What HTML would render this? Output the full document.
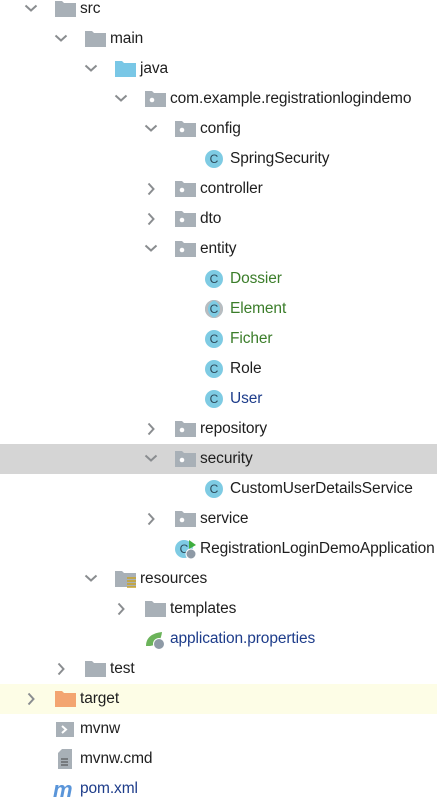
<!DOCTYPE html>
<html><head><meta charset="utf-8"><style>
body{margin:0;width:439px;height:801px;background:#fff;overflow:hidden;position:relative;font-family:"Liberation Sans",sans-serif;font-size:15.5px;color:#1e1e1e}
.r{position:absolute;left:0;width:437px;height:30px}
.t{position:absolute;top:6px;white-space:nowrap;letter-spacing:-0.1px}
.i{position:absolute;top:7px}
.ch{position:absolute;top:9px}
.c{position:absolute;top:6px;width:18px;height:18px;border-radius:50%;background:#7ecbe3;color:#2d4a5a;font-size:12px;text-align:center;line-height:18px}
</style></head><body>
<svg width="0" height="0" style="position:absolute"><defs>
<symbol id="dn" viewBox="0 0 14 10"><path d="M1.5 2.5 L7 7.5 L12.5 2.5" fill="none" stroke="#8a8d90" stroke-width="2"/></symbol>
<symbol id="rt" viewBox="0 0 10 14"><path d="M2.5 1.5 L7.5 7 L2.5 12.5" fill="none" stroke="#8a8d90" stroke-width="2"/></symbol>
<symbol id="fd" viewBox="0 0 21 16"><path d="M0 0 H7 L9 2 H21 V16 H0 Z" fill="#a8b0b7"/></symbol>
<symbol id="fb" viewBox="0 0 21 16"><path d="M0 0 H7 L9 2 H21 V16 H0 Z" fill="#79c7e6"/></symbol>
<symbol id="fo" viewBox="0 0 21 16"><path d="M0 0 H7 L9 2 H21 V16 H0 Z" fill="#f3a571"/></symbol>
<symbol id="pk" viewBox="0 0 21 16"><path d="M0 0 H7 L9 2 H21 V16 H0 Z" fill="#a8b0b7"/><circle cx="7" cy="9" r="2.3" fill="#fff"/></symbol>
</defs></svg>

<div class="r" style="top:-6px"><svg class="ch" style="left:24px" width="14" height="10"><use href="#dn"/></svg><svg class="i" style="left:55px" width="21" height="16"><use href="#fd"/></svg><span class="t" style="left:80px">src</span></div>
<div class="r" style="top:24px"><svg class="ch" style="left:54px" width="14" height="10"><use href="#dn"/></svg><svg class="i" style="left:85px" width="21" height="16"><use href="#fd"/></svg><span class="t" style="left:110px">main</span></div>
<div class="r" style="top:54px"><svg class="ch" style="left:84px" width="14" height="10"><use href="#dn"/></svg><svg class="i" style="left:115px" width="21" height="16"><use href="#fb"/></svg><span class="t" style="left:140px">java</span></div>
<div class="r" style="top:84px"><svg class="ch" style="left:114px" width="14" height="10"><use href="#dn"/></svg><svg class="i" style="left:145px" width="21" height="16"><use href="#pk"/></svg><span class="t" style="left:170px">com.example.registrationlogindemo</span></div>
<div class="r" style="top:114px"><svg class="ch" style="left:144px" width="14" height="10"><use href="#dn"/></svg><svg class="i" style="left:175px" width="21" height="16"><use href="#pk"/></svg><span class="t" style="left:200px">config</span></div>
<div class="r" style="top:144px"><div class="c" style="left:205px">C</div><span class="t" style="left:230px">SpringSecurity</span></div>
<div class="r" style="top:174px"><svg class="ch" style="left:146px;top:8px" width="10" height="14"><use href="#rt"/></svg><svg class="i" style="left:175px" width="21" height="16"><use href="#pk"/></svg><span class="t" style="left:200px">controller</span></div>
<div class="r" style="top:204px"><svg class="ch" style="left:146px;top:8px" width="10" height="14"><use href="#rt"/></svg><svg class="i" style="left:175px" width="21" height="16"><use href="#pk"/></svg><span class="t" style="left:200px">dto</span></div>
<div class="r" style="top:234px"><svg class="ch" style="left:144px" width="14" height="10"><use href="#dn"/></svg><svg class="i" style="left:175px" width="21" height="16"><use href="#pk"/></svg><span class="t" style="left:200px">entity</span></div>
<div class="r" style="top:264px"><div class="c" style="left:205px">C</div><span class="t" style="left:230px;color:#3b7d2a">Dossier</span></div>
<div class="r" style="top:294px"><div class="c" style="left:205px;box-shadow:inset 3px 0 0 #b9bcbf,inset -3px 0 0 #b9bcbf">C</div><span class="t" style="left:230px;color:#3b7d2a">Element</span></div>
<div class="r" style="top:324px"><div class="c" style="left:205px">C</div><span class="t" style="left:230px;color:#3b7d2a">Ficher</span></div>
<div class="r" style="top:354px"><div class="c" style="left:205px">C</div><span class="t" style="left:230px">Role</span></div>
<div class="r" style="top:384px"><div class="c" style="left:205px">C</div><span class="t" style="left:230px;color:#1d3c8a">User</span></div>
<div class="r" style="top:414px"><svg class="ch" style="left:146px;top:8px" width="10" height="14"><use href="#rt"/></svg><svg class="i" style="left:175px" width="21" height="16"><use href="#pk"/></svg><span class="t" style="left:200px">repository</span></div>
<div class="r" style="top:444px;background:#d5d5d5"><svg class="ch" style="left:144px" width="14" height="10"><use href="#dn"/></svg><svg class="i" style="left:175px" width="21" height="16"><use href="#pk"/></svg><span class="t" style="left:200px">security</span></div>
<div class="r" style="top:474px"><div class="c" style="left:205px">C</div><span class="t" style="left:230px">CustomUserDetailsService</span></div>
<div class="r" style="top:504px"><svg class="ch" style="left:146px;top:8px" width="10" height="14"><use href="#rt"/></svg><svg class="i" style="left:175px" width="21" height="16"><use href="#pk"/></svg><span class="t" style="left:200px">service</span></div>
<div class="r" style="top:534px"><div class="c" style="left:175px">C</div><svg style="position:absolute;left:183px;top:4px" width="16" height="22"><path d="M6 2 L13 7 L6 11Z" fill="#3fae3f"/><circle cx="8" cy="16" r="5" fill="#8e9aa6" stroke="#fff" stroke-width="1"/></svg><span class="t" style="left:200px">RegistrationLoginDemoApplication</span></div>
<div class="r" style="top:564px"><svg class="ch" style="left:84px" width="14" height="10"><use href="#dn"/></svg><svg class="i" style="left:115px" width="21" height="16"><use href="#fd"/></svg><svg style="position:absolute;left:127px;top:13px" width="10" height="12"><path d="M0 1h9M0 4h9M0 7h9M0 10h9" stroke="#c9a227" stroke-width="1.6"/></svg><span class="t" style="left:140px">resources</span></div>
<div class="r" style="top:594px"><svg class="ch" style="left:116px;top:8px" width="10" height="14"><use href="#rt"/></svg><svg class="i" style="left:145px" width="21" height="16"><use href="#fd"/></svg><span class="t" style="left:170px">templates</span></div>
<div class="r" style="top:624px"><svg style="position:absolute;left:144px;top:6px" width="24" height="20"><path d="M2 16 C2 6 10 3 18 2 C17 10 14 15 6 16Z" fill="#6bb35a"/><circle cx="15" cy="14" r="5.5" fill="#8e9aa6" stroke="#fff" stroke-width="1"/></svg><span class="t" style="left:170px;color:#1d3c8a">application.properties</span></div>
<div class="r" style="top:654px"><svg class="ch" style="left:56px;top:8px" width="10" height="14"><use href="#rt"/></svg><svg class="i" style="left:85px" width="21" height="16"><use href="#fd"/></svg><span class="t" style="left:110px">test</span></div>
<div class="r" style="top:684px;background:#fdfde6"><svg class="ch" style="left:26px;top:8px" width="10" height="14"><use href="#rt"/></svg><svg class="i" style="left:55px" width="21" height="16"><use href="#fo"/></svg><span class="t" style="left:80px">target</span></div>
<div class="r" style="top:714px"><svg style="position:absolute;left:56px;top:8px" width="18" height="15"><rect width="18" height="15" fill="#a8b0b7"/><path d="M6 4 L10 7.5 L6 11" stroke="#fff" stroke-width="2" fill="none"/></svg><span class="t" style="left:80px">mvnw</span></div>
<div class="r" style="top:744px"><svg style="position:absolute;left:58px;top:5px" width="14" height="20"><path d="M4 0 H14 V20 H0 V4 Z" fill="#a8b0b7"/><path d="M3 10h7M3 13h7M3 16h7" stroke="#444" stroke-width="1"/></svg><span class="t" style="left:80px">mvnw.cmd</span></div>
<div class="r" style="top:774px"><span style="position:absolute;left:53px;top:3px;font-size:22px;font-style:italic;font-weight:bold;color:#5a95d9;letter-spacing:-1px">m</span><span class="t" style="left:80px;color:#1d3c8a">pom.xml</span></div>
</body></html>
